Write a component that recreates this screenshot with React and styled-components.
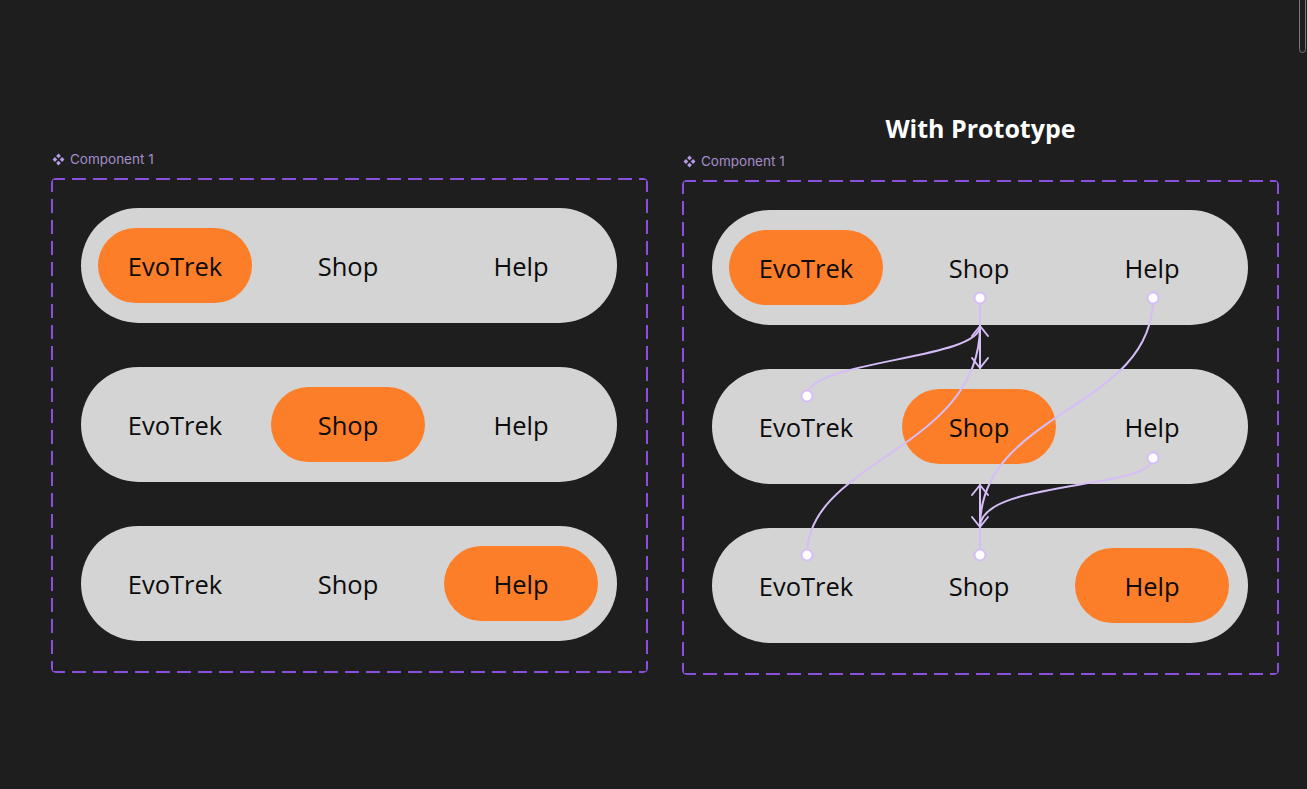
import React from "react";
import styled, { createGlobalStyle } from "styled-components";

const GlobalStyle = createGlobalStyle`
  html, body {
    margin: 0;
    padding: 0;
    background: #1e1e1e;
  }
  body {
    font-family: "Open Sans", "Liberation Sans", sans-serif;
    overflow: hidden;
  }
`;

const tabs = ["EvoTrek", "Shop", "Help"];

const Page = styled.div`
  position: relative;
  width: 1307px;
  height: 789px;
  box-sizing: border-box;
  padding: 113px 0 0 51px;
  display: flex;
  align-items: flex-start;
  gap: 34px;
`;

const Column = styled.div`
  display: flex;
  flex-direction: column;
  padding-top: ${(p) => p.$offset || 0}px;
`;

const Title = styled.h2`
  margin: 0 0 10px;
  height: 30px;
  line-height: 30px;
  text-align: center;
  color: #ffffff;
  font-family: "Open Sans", "Liberation Sans", sans-serif;
  font-weight: 700;
  font-size: 25px;
`;

const Label = styled.div`
  display: flex;
  align-items: center;
  gap: 5px;
  height: 16px;
  margin: 0 0 11px 1px;
  color: #a48dcc;
  font-family: Inter, "Liberation Sans", sans-serif;
  font-size: 13.5px;
`;

const dash = "#8a4fdc";

const Frame = styled.div`
  position: relative;
  width: 597px;
  box-sizing: border-box;
  padding: 30px 30px 32px;
  display: flex;
  flex-direction: column;
  gap: 44px;
  border-radius: 5px;
  background:
    repeating-linear-gradient(90deg, ${dash} 0 14px, transparent 14px 21px) top left / 100% 2px no-repeat,
    repeating-linear-gradient(90deg, ${dash} 0 14px, transparent 14px 21px) bottom left / 100% 2px no-repeat,
    repeating-linear-gradient(180deg, ${dash} 0 14px, transparent 14px 21px) top left / 2px 100% no-repeat,
    repeating-linear-gradient(180deg, ${dash} 0 14px, transparent 14px 21px) top right / 2px 100% no-repeat;
`;

const Bar = styled.div`
  width: 536px;
  height: 115px;
  box-sizing: border-box;
  padding: 20px 17px;
  border-radius: 58px;
  background: #d4d4d4;
  display: flex;
  gap: 19px;
`;

const Tab = styled.div`
  width: 154px;
  height: 75px;
  border-radius: 38px;
  background: ${(p) => (p.$active ? "#fd7e28" : "transparent")};
  color: #0c0c0c;
  font-size: 25.5px;
  font-weight: 500;
  display: flex;
  align-items: center;
  justify-content: center;
`;

const Links = styled.svg`
  position: absolute;
  left: 0;
  top: 0;
  width: 597px;
  height: 495px;
  overflow: visible;
  pointer-events: none;
`;

const ScrollThumb = styled.div`
  position: absolute;
  left: 1299px;
  top: -10px;
  width: 5px;
  height: 61px;
  border: 1.5px solid #7a7a7a;
  border-radius: 4px;
`;

const ComponentIcon = () => (
  <svg width="13" height="13" viewBox="0 0 12 12">
    <g fill="#b79be6">
      <path d="M6 0.5 L8.2 2.7 L6 4.9 L3.8 2.7 Z" />
      <path d="M6 7.1 L8.2 9.3 L6 11.5 L3.8 9.3 Z" />
      <path d="M2.7 3.8 L4.9 6 L2.7 8.2 L0.5 6 Z" />
      <path d="M9.3 3.8 L11.5 6 L9.3 8.2 L7.1 6 Z" />
    </g>
  </svg>
);

const dots = [
  [298, 118],
  [471, 118],
  [125, 216],
  [471, 278],
  [125, 375],
  [298, 375],
];

const curves = [
  "M298,118 L298,188",
  "M471,118 C471,230 298,230 298,347",
  "M125,216 C125,180 298,180 298,146",
  "M471,278 C471,310 298,300 298,347",
  "M125,375 C125,280 298,270 298,146",
  "M298,375 L298,305",
];

const heads = [
  "M290,156 L298,146 L306,156",
  "M290,178 L298,188 L306,178",
  "M290,315 L298,305 L306,315",
  "M290,337 L298,347 L306,337",
];

const Navs = () =>
  tabs.map((_, row) => (
    <Bar key={row}>
      {tabs.map((t, i) => (
        <Tab key={t} $active={i === row}>
          {t}
        </Tab>
      ))}
    </Bar>
  ));

const App = () => {
  return (
    <Page>
      <GlobalStyle />
      <ScrollThumb />
      <Column $offset={38}>
        <Label>
          <ComponentIcon />
          Component 1
        </Label>
        <Frame>
          <Navs />
        </Frame>
      </Column>
      <Column>
        <Title>With Prototype</Title>
        <Label>
          <ComponentIcon />
          Component 1
        </Label>
        <Frame>
          <Navs />
          <Links viewBox="0 0 597 495">
            <g fill="none" stroke="#d5bdf7" strokeWidth="2" strokeLinecap="round" strokeLinejoin="round">
              {curves.map((d) => (
                <path key={d} d={d} />
              ))}
              {heads.map((d) => (
                <path key={d} d={d} />
              ))}
            </g>
            {dots.map(([x, y]) => (
              <circle key={`${x}-${y}`} cx={x} cy={y} r="5.5" fill="#ffffff" stroke="#d5bdf7" strokeWidth="2" />
            ))}
          </Links>
        </Frame>
      </Column>
    </Page>
  );
};

export default App;
